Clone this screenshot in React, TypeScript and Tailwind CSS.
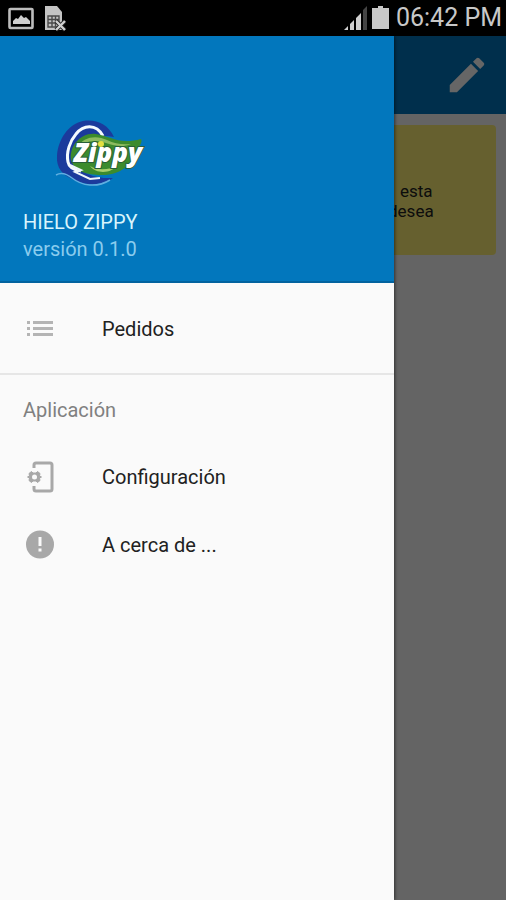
import React from "react";

function StatusBar() {
  return (
    <header className="flex h-9 shrink-0 items-center justify-between bg-black pl-2 pr-1 text-[#c8c8c8]">
      <div className="flex items-center gap-2">
        <svg className="h-6 w-7" viewBox="0 0 28 24" aria-label="Imagen">
          <rect x="1.5" y="3" width="23" height="19" rx="1" fill="none" stroke="#bdbdbd" strokeWidth="2.6" />
          <path d="M5 18v-3l3-3 2 1 3-4 3 3 2-1 4 4v3z" fill="#d0d0d0" />
        </svg>
        <svg className="h-7 w-6" viewBox="0 0 24 28" aria-label="Tarjeta SIM">
          <path d="M1 2h12l5 6v18H1z" fill="#c4c4c4" />
          <path d="M4 12h11v11H4zM4 15.500h11M4 19h11M8 12v11M11.500 12v11" fill="none" stroke="#4a4a4a" strokeWidth="1.400" />
          <path d="M12 17l9 9M21 17l-9 9" stroke="#222" strokeWidth="4" />
          <path d="M12 17l9 9M21 17l-9 9" stroke="#d0d0d0" strokeWidth="2.400" />
        </svg>
      </div>
      <div className="flex items-center gap-1">
        <svg className="h-7 w-6" viewBox="0 0 24 28" aria-label="Señal">
          <path d="M0 26l4-4v4zM6 20l4-4v10H6zM12 14l5-5v17h-5z" fill="#d0d0d0" />
          <path d="M19 6l4-4v24h-4z" fill="#444" />
        </svg>
        <svg className="h-7 w-5" viewBox="0 0 20 28" aria-label="Batería">
          <path d="M0 4h6V2h5v2h6v21H0z" fill="#c8c8c8" />
        </svg>
        <time className="text-[25px] leading-9">06:42 PM</time>
      </div>
    </header>
  );
}

function ZippyLogo() {
  return (
    <svg className="h-[70px] w-[94px]" viewBox="0 0 94 70" role="img" aria-label="Zippy">
      <path d="M62 18C56 5 44 0 31 2C16 5 6 21 5 37C4 49 11 56 20 60C32 67 50 67 61 59C45 60 28 55 24 43C20 27 38 13 62 18Z" fill="#1b3a9c" />
      <path d="M4 56C9 53 15 55 20 59C30 67 45 69 58 61" fill="none" stroke="#5faee0" strokeWidth="1.500" />
      <path d="M51 17C44 4 31 6 24 15C18 22 14 33 16 43C17 49 22 51 29 52" fill="none" stroke="#f5faff" strokeWidth="3" />
      <path d="M19 41C17 27 29 13 44 15C58 17 67 26 89 20C91 23 87 27 85 31C80 47 66 57 49 56C35 56 22 52 19 41Z" fill="#3c8b2d" />
      <path d="M25 29C31 17 45 16 55 21C63 25 71 26 79 25C65 31 54 22 43 22C35 22 30 25 25 29Z" fill="#8dbb60" />
      <path d="M38 47C46 52 58 51 66 46C60 54 45 56 38 47Z" fill="#a9cf6a" />
      <path d="M18 46l11 5-6 2 15 7 10-1" fill="none" stroke="#eef6fb" strokeWidth="2" />
      <text x="22" y="43" fontFamily="Open Sans, sans-serif" fontSize="26" fontWeight="800" fontStyle="italic" fill="#fff" stroke="#285f38" strokeWidth="2" paintOrder="stroke">Zippy</text>
      <circle cx="49" cy="25" r="3" fill="#e4df42" />
    </svg>
  );
}

function ListIcon() {
  return (
    <svg className="h-8 w-8" viewBox="0 0 32 32" fill="#b4b4b4" aria-hidden="true">
      <path d="M3 8h3v3H3zM3 14h3v3H3zM3 20h3v3H3zM9 8h20v3H9zM9 14h20v3H9zM9 20h20v3H9z" />
    </svg>
  );
}

function PhoneSetupIcon() {
  return (
    <svg className="h-8 w-8" viewBox="0 0 32 32" fill="none" stroke="#a8a8a8" aria-hidden="true">
      <path d="M10 7V4a2 2 0 0 1 2-2h14a2 2 0 0 1 2 2v24a2 2 0 0 1-2 2H12a2 2 0 0 1-2-2v-3" strokeWidth="3" />
      <path d="M7.500 10.500l1.500 1.500h3l1.500-1.500 2.500 2-.5 2.500 2 1-2 1 .5 2.500-2.500 2-1.500-1.500h-3l-1.500 1.500-2.500-2 .5-2.500-2-1 2-1-.5-2.500z" fill="#a8a8a8" strokeWidth="1" strokeLinejoin="round" />
      <circle cx="10.500" cy="16" r="2.500" fill="#fafafa" stroke="none" />
    </svg>
  );
}

function AlertIcon() {
  return (
    <svg className="h-8 w-8" viewBox="0 0 32 32" aria-hidden="true">
      <circle cx="16" cy="15.500" r="14" fill="#a8a8a8" />
      <path d="M14.500 8h3v9h-3zM14.500 19.500h3v3h-3z" fill="#fafafa" />
    </svg>
  );
}

function MenuItem({ icon, label }: { icon: React.ReactNode; label: string }) {
  return (
    <li>
      <button type="button" className="flex h-[68px] w-full items-center gap-[46px] px-6 text-left text-xl text-[#212121]">
        {icon}
        <span>{label}</span>
      </button>
    </li>
  );
}

function Drawer() {
  return (
    <aside className="absolute inset-y-0 left-0 right-28 flex flex-col bg-[#fafafa] shadow-[1px_0_3px_rgba(0,0,0,0.5)]">
      <div className="flex h-[247px] shrink-0 flex-col justify-end border-b-2 border-[#02639f] bg-[#0277bd] px-[23px] pb-[18px]">
        <div className="mb-5 pl-[29px]">
          <ZippyLogo />
        </div>
        <h1 className="text-xl leading-[27px] text-[#d8f4fc]">HIELO ZIPPY</h1>
        <p className="text-xl leading-[27px] text-[#8accee]">versión 0.1.0</p>
      </div>
      <nav>
        <ul className="border-b-2 border-[#e6e6e6] pb-[10px] pt-3">
          <MenuItem icon={<ListIcon />} label="Pedidos" />
        </ul>
        <h2 className="px-[23px] pt-5 text-xl leading-[30px] text-[#808080]">Aplicación</h2>
        <ul className="pt-[18px]">
          <MenuItem icon={<PhoneSetupIcon />} label="Configuración" />
          <MenuItem icon={<AlertIcon />} label="A cerca de ..." />
        </ul>
      </nav>
    </aside>
  );
}

export default function App() {
  return (
    <div className="flex min-h-screen flex-col font-['Roboto',sans-serif]">
      <StatusBar />
      <div className="relative flex flex-1 flex-col overflow-hidden bg-[#fafafa]">
        <div className="flex h-[78px] shrink-0 items-center justify-end bg-[#0277bd] pr-4">
          <button type="button" aria-label="Editar">
            <svg className="h-[46px] w-[46px]" viewBox="0 0 24 24" fill="#fff" aria-hidden="true">
              <path d="M3 17.250V21h3.750L17.810 9.940l-3.750-3.750L3 17.250zM20.710 7.040a1 1 0 0 0 0-1.410l-2.340-2.340a1 1 0 0 0-1.410 0l-1.830 1.830 3.750 3.750 1.830-1.830z" />
            </svg>
          </button>
        </div>
        <main className="p-[10px] pt-[11px]">
          <article className="flex h-[130px] flex-col items-end justify-center rounded-sm bg-[#fff176] pr-[60px] pt-[22px] text-[17px] leading-5 text-[#212121]">
            <p className="w-10 whitespace-nowrap">
              <span className="pl-1">esta</span>
              <br />
              <span className="-ml-2">desea</span>
            </p>
          </article>
        </main>
        <div className="absolute inset-0 bg-black/60" />
        <Drawer />
      </div>
    </div>
  );
}
